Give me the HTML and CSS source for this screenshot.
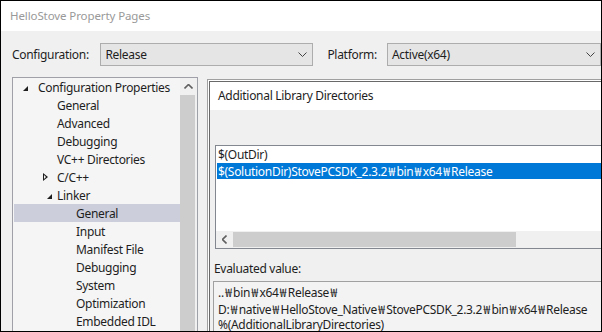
FILE: index.html
```html
<!DOCTYPE html>
<html lang="en">
<head>
    <meta charset="UTF-8">
    <meta name="viewport" content="width=device-width, initial-scale=1.0">
    <title>HelloStove Property Pages</title>
    <link rel="stylesheet" href="styles.css">
</head>
<body>
    <div class="window">
        <div class="titlebar">HelloStove Property Pages</div>
        <div class="client">
            <div class="config-row">
                <span class="label label-config">Configuration:</span>
                <div class="combo combo-config">
                    <span>Release</span>
                    <svg class="chevron" width="9" height="5" viewBox="0 0 9 5"><path d="M0.5 0.5 L4.5 4.5 L8.5 0.5" fill="none" stroke="#444" stroke-width="1"/></svg>
                </div>
                <span class="label label-platform">Platform:</span>
                <div class="combo combo-platform">
                    <span>Active(x64)</span>
                    <svg class="chevron" width="9" height="5" viewBox="0 0 9 5"><path d="M0.5 0.5 L4.5 4.5 L8.5 0.5" fill="none" stroke="#444" stroke-width="1"/></svg>
                </div>
            </div>

            <div class="main">
                <div class="tree">
                    <ul class="tree-list">
                        <li class="node lvl0"><span class="exp open"></span>Configuration Properties</li>
                        <li class="node lvl1">General</li>
                        <li class="node lvl1">Advanced</li>
                        <li class="node lvl1">Debugging</li>
                        <li class="node lvl1">VC++ Directories</li>
                        <li class="node lvl1"><span class="exp closed"></span>C/C++</li>
                        <li class="node lvl1"><span class="exp open"></span>Linker</li>
                        <li class="node lvl2 selected">General</li>
                        <li class="node lvl2">Input</li>
                        <li class="node lvl2">Manifest File</li>
                        <li class="node lvl2">Debugging</li>
                        <li class="node lvl2">System</li>
                        <li class="node lvl2">Optimization</li>
                        <li class="node lvl2">Embedded IDL</li>
                    </ul>
                    <div class="vscroll">
                        <div class="vscroll-btn">
                            <svg width="9" height="5" viewBox="0 0 9 5"><path d="M0.5 4.5 L4.5 0.5 L8.5 4.5" fill="none" stroke="#606060" stroke-width="1.6"/></svg>
                        </div>
                        <div class="vscroll-thumb"></div>
                    </div>
                </div>

                <div class="page">
                    <div class="page-head">Additional Library Directories</div>
                    <div class="page-body">
                        <div class="listbox">
                            <div class="list-items">
                                <div class="item">$(OutDir)</div>
                                <div class="item selected">$(SolutionDir)StovePCSDK_2.3.2<span class="won">₩</span>bin<span class="won">₩</span>x64<span class="won">₩</span>Release</div>
                            </div>
                            <div class="hscroll">
                                <div class="hscroll-btn">
                                    <svg width="5" height="9" viewBox="0 0 5 9"><path d="M4.5 0.5 L0.5 4.5 L4.5 8.5" fill="none" stroke="#606060" stroke-width="1.6"/></svg>
                                </div>
                                <div class="hscroll-thumb"></div>
                            </div>
                        </div>
                        <div class="eval-label">Evaluated value:</div>
                        <div class="eval-box">
                            <div>..<span class="won">₩</span>bin<span class="won">₩</span>x64<span class="won">₩</span>Release<span class="won">₩</span></div>
                            <div>D:<span class="won">₩</span>native<span class="won">₩</span>HelloStove_Native<span class="won">₩</span>StovePCSDK_2.3.2<span class="won">₩</span>bin<span class="won">₩</span>x64<span class="won">₩</span>Release</div>
                            <div>%(AdditionalLibraryDirectories)</div>
                        </div>
                    </div>
                </div>
            </div>
        </div>
    </div>
</body>
</html>
```

FILE: styles.css
```css
html, body {
    margin: 0;
    padding: 0;
}
body {
    font-family: "Noto Sans", "Noto Sans CJK KR", sans-serif;
    font-size: 12px;
    letter-spacing: -0.3px;
    color: #1e1e1e;
}
.window {
    width: 602px;
    height: 332px;
    box-sizing: border-box;
    border: 1px solid #000;
    overflow: hidden;
    background-color: #f0f0f0;
}
.titlebar {
    height: 30px;
    line-height: 30px;
    padding-left: 9px;
    background-color: #fff;
    color: #999;
    font-size: 11.5px;
    letter-spacing: -0.1px;
}
.client {
    padding: 12px 0 0 11px;
}
.won {
    font-family: "Noto Sans CJK KR", sans-serif;
    letter-spacing: 0;
    padding: 0 1.3px;
}

/* configuration row */
.config-row {
    display: flex;
    align-items: center;
    height: 23px;
}
.label-config { width: 89px; }
.label-platform {
    width: 60px;
    margin-left: 14px;
}
.combo {
    flex-shrink: 0;
    display: flex;
    align-items: center;
    justify-content: space-between;
    height: 23px;
    box-sizing: border-box;
    border: 1px solid #adadad;
    background-color: #e5e5e5;
    padding: 0 5px 0 4px;
}
.combo-config { width: 213px; }
.combo-platform { width: 214px; }
.chevron { flex-shrink: 0; }

/* main area */
.main {
    display: flex;
    align-items: flex-start;
    margin-top: 11px;
}
.tree {
    flex-shrink: 0;
    display: flex;
    width: 186px;
    height: 270px;
    box-sizing: border-box;
    border: 1px solid #a0a0a8;
    background-color: #f5f5f5;
}
.tree-list {
    list-style: none;
    margin: 0;
    padding: 0 0 0 1px;
    width: 166px;
}
.node {
    position: relative;
    height: 18px;
    line-height: 19px;
    white-space: nowrap;
}
.lvl0 { padding-left: 24px; }
.lvl1 { padding-left: 43px; }
.lvl2 { padding-left: 62px; }
.node.selected { background-color: #cccedb; }
.exp {
    position: absolute;
    top: 0;
    width: 6px;
    height: 18px;
}
.lvl0 .exp { left: 9px; }
.lvl1 .exp { left: 29px; }
.exp.open::after {
    content: "";
    position: absolute;
    left: 0;
    top: 8px;
    border-style: solid;
    border-width: 0 0 5px 5px;
    border-color: transparent transparent #1e1e1e transparent;
}
.lvl1 .exp.open { left: 33px; }
.exp.closed::after {
    content: "";
    position: absolute;
    left: 0;
    top: 5px;
    width: 0;
    height: 0;
    border-style: solid;
    border-width: 4px 0 4px 5px;
    border-color: transparent transparent transparent #1e1e1e;
}
.exp.closed::before {
    content: "";
    position: absolute;
    left: 1px;
    top: 7px;
    z-index: 1;
    border-style: solid;
    border-width: 2px 0 2px 2px;
    border-color: transparent transparent transparent #f5f5f5;
}
.vscroll {
    width: 17px;
    background-color: #f0f0f0;
}
.vscroll-btn {
    height: 17px;
    display: flex;
    align-items: center;
    justify-content: center;
}
.vscroll-thumb {
    width: 15px;
    height: 240px;
    background-color: #cdcdcd;
}

/* property page */
.page {
    flex-shrink: 0;
    width: 420px;
    height: 260px;
    margin: 2px 0 0 9px;
    box-sizing: border-box;
    border: 1px solid #a0a0a0;
    box-shadow: inset 1px 1px 0 #fff, inset 2px 2px 0 #696969;
    padding: 2px 0 0 2px;
}
.page-head {
    height: 28px;
    line-height: 28px;
    padding-left: 8px;
    background-color: #fff;
}
.page-body {
    padding: 35px 0 0 3px;
}
.listbox {
    margin-left: 2px;
    height: 104px;
    box-sizing: border-box;
    border: 1px solid #828790;
    border-right: none;
    background-color: #fff;
    display: flex;
    flex-direction: column;
}
.list-items {
    flex: 1;
    padding: 1px 0 0 1px;
}
.item {
    height: 16px;
    line-height: 16px;
    padding-left: 1px;
    white-space: nowrap;
}
.item.selected {
    background-color: #0078d7;
    color: #fff;
}
.hscroll {
    display: flex;
    height: 17px;
    background-color: #f0f0f0;
}
.hscroll-btn {
    width: 17px;
    display: flex;
    align-items: center;
    justify-content: center;
}
.hscroll-thumb {
    width: 283px;
    height: 15px;
    margin-top: 1px;
    background-color: #cdcdcd;
}
.eval-label {
    margin-top: 12px;
    height: 20px;
    line-height: 16px;
    padding-left: 1px;
}
.eval-box {
    border-top: 1px solid #a0a0a0;
    border-left: 1px solid #a0a0a0;
    background-color: #f3f3f3;
    padding: 2px 0 0 4px;
    line-height: 15.5px;
    white-space: nowrap;
}
```
